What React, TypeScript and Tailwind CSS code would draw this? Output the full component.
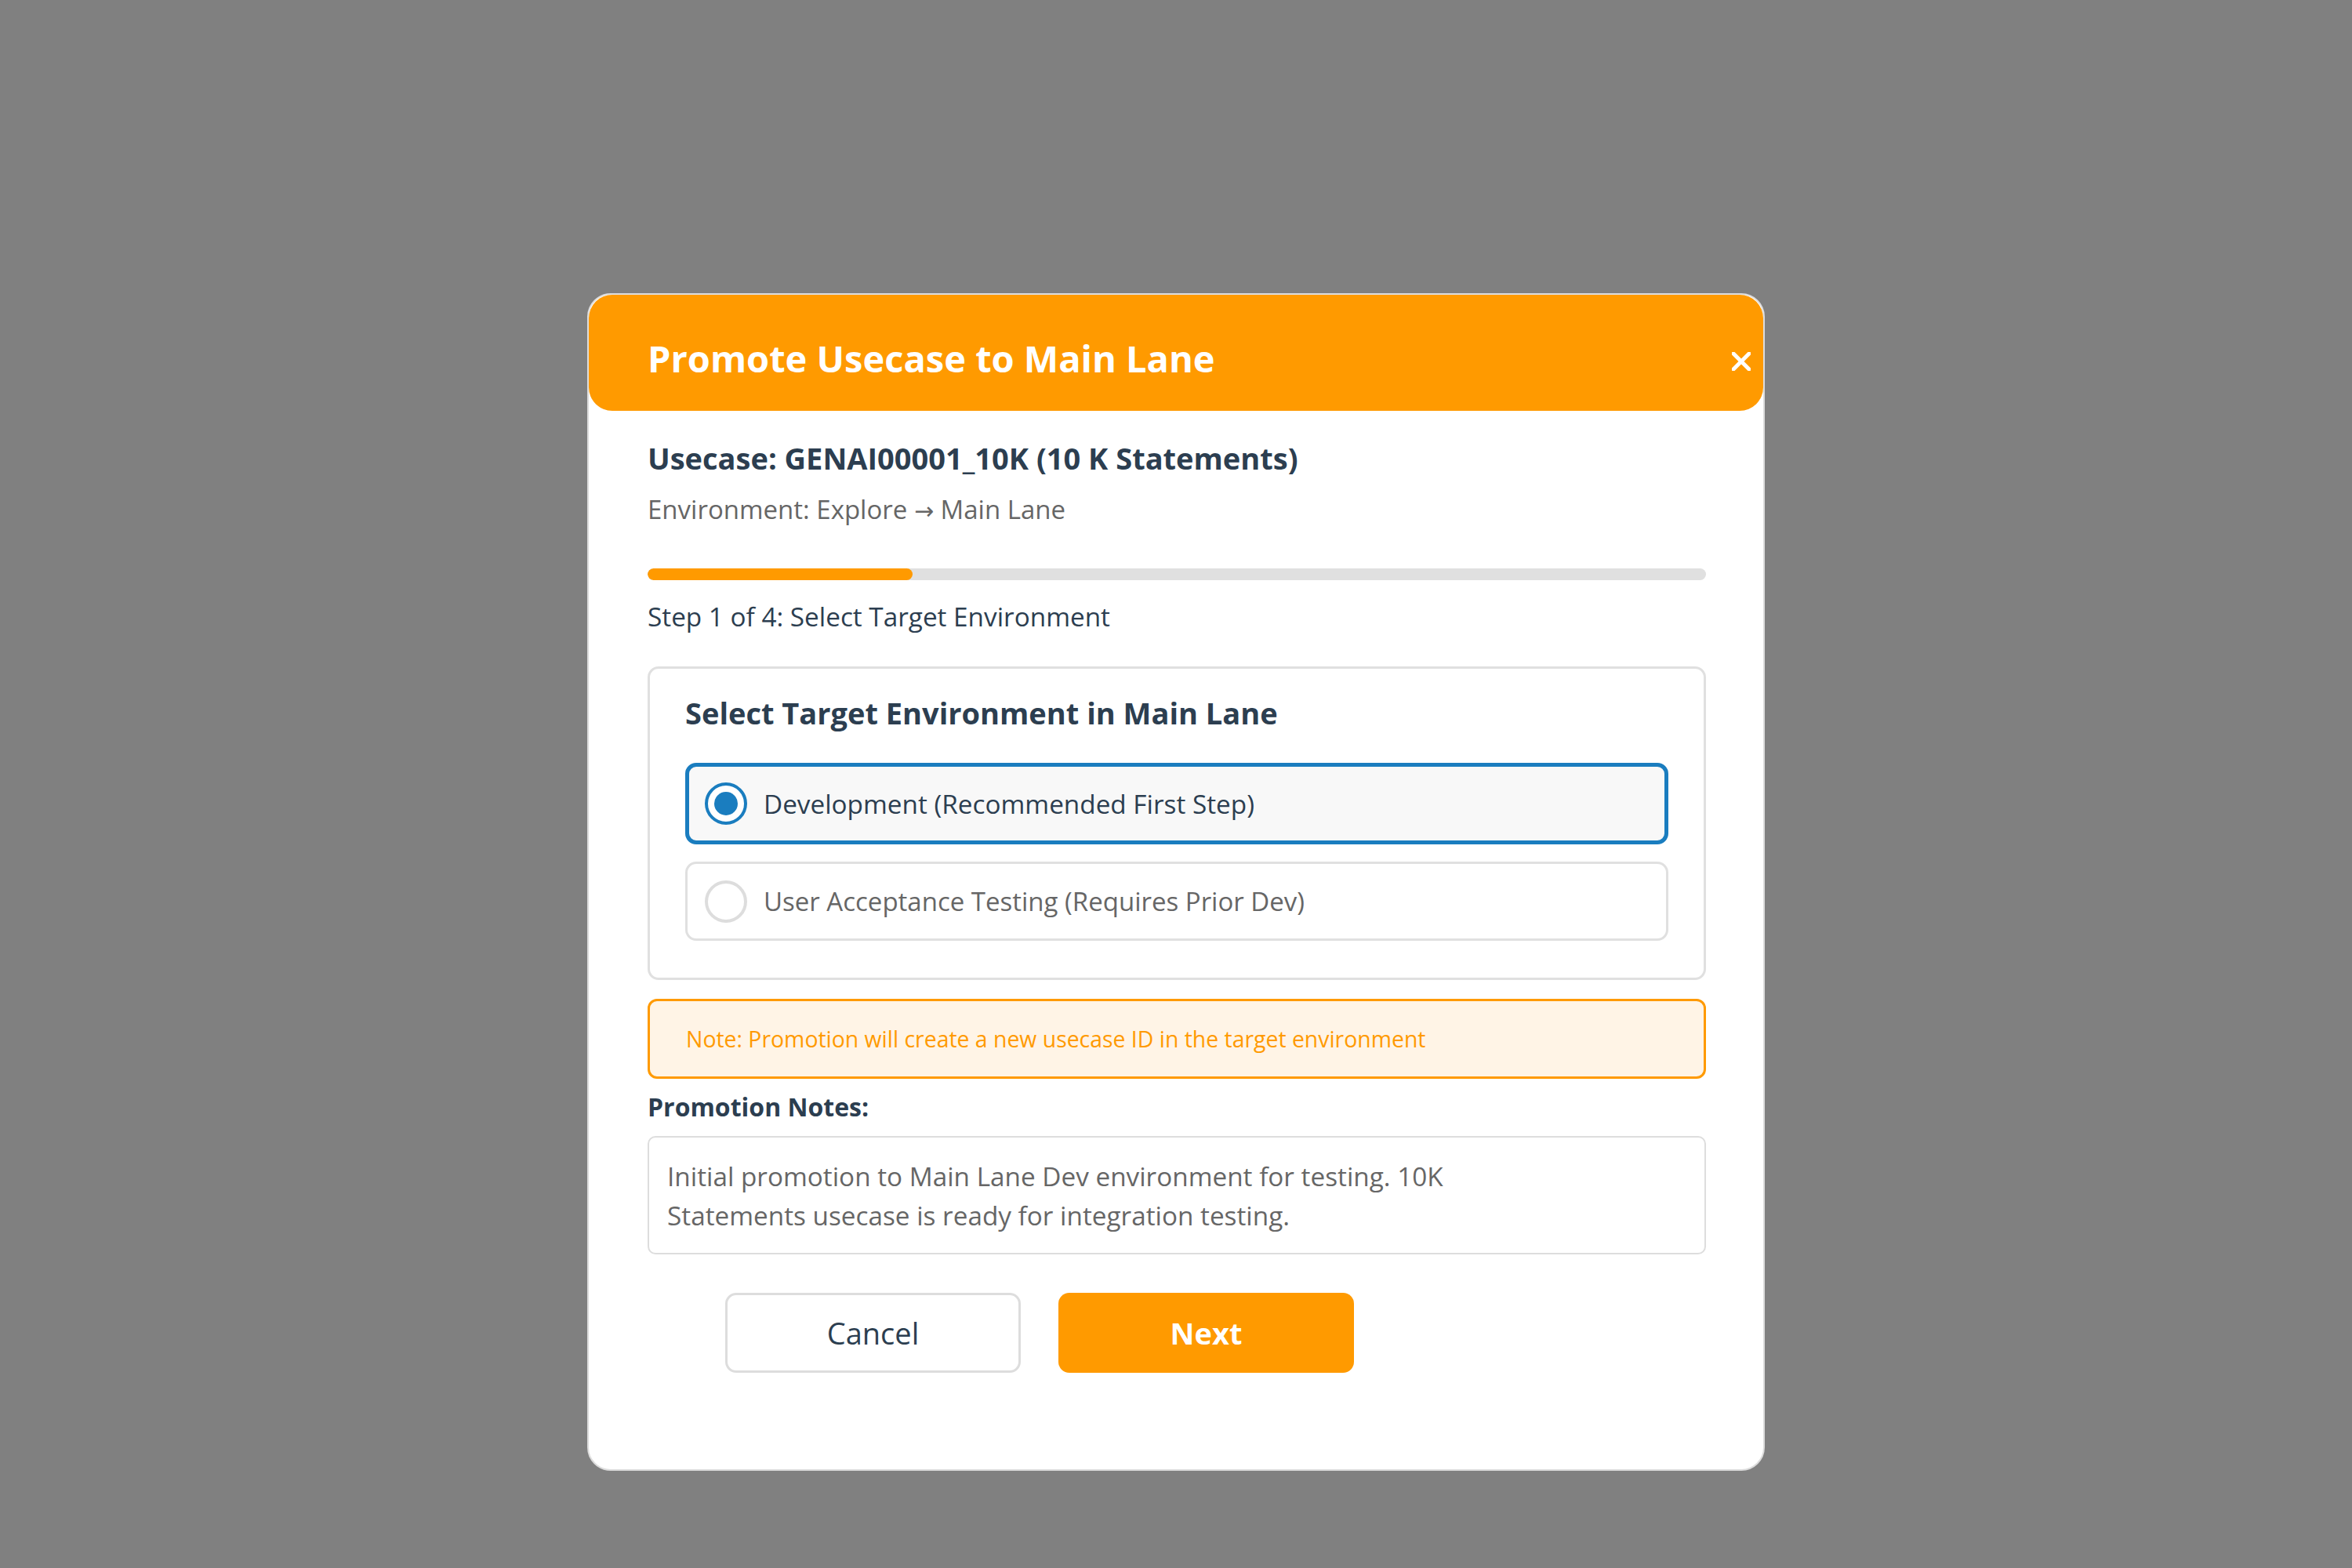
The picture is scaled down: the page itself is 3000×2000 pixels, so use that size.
import React from "react";

function Radio({ checked }: { checked: boolean }) {
  if (checked) {
    return (
      <div className="w-[54px] h-[54px] shrink-0 rounded-full border-[4px] border-[#1a7dbf] bg-white flex items-center justify-center">
        <div className="w-[30px] h-[30px] rounded-full bg-[#1a7dbf]" />
      </div>
    );
  }
  return <div className="w-[54px] h-[54px] shrink-0 rounded-full border-[4px] border-[#dddddd] bg-white" />;
}

export default function App() {
  return (
    <div className="w-[3000px] h-[2000px] bg-[#808080] flex justify-center pt-[374px] font-['Open_Sans',sans-serif]">
      <div className="w-[1502px] h-[1502px] bg-white rounded-[30px] border-2 border-[#dddddd] flex flex-col">
        <div className="h-[148px] rounded-[30px] bg-[#ff9a00] flex items-center justify-between pl-[75px] pr-[16px]">
          <h1 className="mt-[13px] text-[47px] leading-[60px] font-bold text-white">Promote Usecase to Main Lane</h1>
          <svg width="24" height="24" viewBox="0 0 24 24" className="mt-[22px]">
            <path d="M2 2 L22 22 M22 2 L2 22" stroke="#ffffff" strokeWidth="5" strokeLinecap="square" />
          </svg>
        </div>
        <div className="pl-[75px] pr-[73px] flex flex-col">
          <div className="mt-[34px] text-[38px] leading-[52px] font-bold text-[#2c3e50]">
            Usecase: GENAI00001_10K (10 K Statements)
          </div>
          <div className="mt-[17px] h-[46px] overflow-visible text-[33px] leading-[46px] text-[#666666] whitespace-nowrap">
            Environment: Explore <span className="font-['DejaVu_Sans',sans-serif] text-[30px] leading-[0px]">→</span> Main Lane
          </div>
          <div className="mt-[52px] h-[15px] rounded-full bg-[#e0e0e0] overflow-hidden">
            <div className="h-full w-1/4 rounded-full bg-[#ff9a00]" />
          </div>
          <div className="mt-[22px] text-[33.3px] leading-[48px] text-[#2c3e50]">Step 1 of 4: Select Target Environment</div>
          <div className="mt-[40px] rounded-[14px] border-[3px] border-[#e0e0e0] pt-[30px] pb-[47px] px-[45px] flex flex-col">
            <div className="text-[38px] leading-[52px] font-bold text-[#2c3e50]">Select Target Environment in Main Lane</div>
            <div className="mt-[38px] h-[104px] rounded-[14px] border-[5px] border-[#1a7dbf] bg-[#f8f8f8] flex items-center pl-[20px]">
              <Radio checked />
              <span className="ml-[21px] text-[33.3px] leading-[46px] text-[#2c3e50]">Development (Recommended First Step)</span>
            </div>
            <div className="mt-[22px] h-[101px] rounded-[14px] border-[3px] border-[#e0e0e0] bg-white flex items-center pl-[22px]">
              <Radio checked={false} />
              <span className="ml-[21px] text-[33px] leading-[46px] text-[#666666]">User Acceptance Testing (Requires Prior Dev)</span>
            </div>
          </div>
          <div className="mt-[24px] h-[102px] rounded-[12px] border-[3px] border-[#ff9a00] bg-[#fff4e6] flex items-center pl-[46px]">
            <span className="text-[28.4px] leading-[38px] text-[#ff9a00]">Note: Promotion will create a new usecase ID in the target environment</span>
          </div>
          <div className="mt-[14px] text-[32px] leading-[44px] font-bold text-[#2c3e50]">Promotion Notes:</div>
          <textarea
            readOnly
            className="mt-[15px] h-[151px] resize-none rounded-[10px] border-2 border-[#dddddd] pt-[24px] pl-[23px] pr-[20px] text-[33.3px] leading-[50px] text-[#666666] outline-none"
            defaultValue={"Initial promotion to Main Lane Dev environment for testing. 10K\nStatements usecase is ready for integration testing."}
          />
          <div className="mt-[49px] ml-[99px] flex gap-[48px]">
            <button className="w-[377px] h-[102px] rounded-[14px] border-[3px] border-[#dddddd] bg-white text-[38px] text-[#2c3e50]">
              Cancel
            </button>
            <button className="w-[377px] h-[102px] rounded-[14px] bg-[#ff9a00] text-[38px] font-bold text-white">
              Next
            </button>
          </div>
        </div>
      </div>
    </div>
  );
}
